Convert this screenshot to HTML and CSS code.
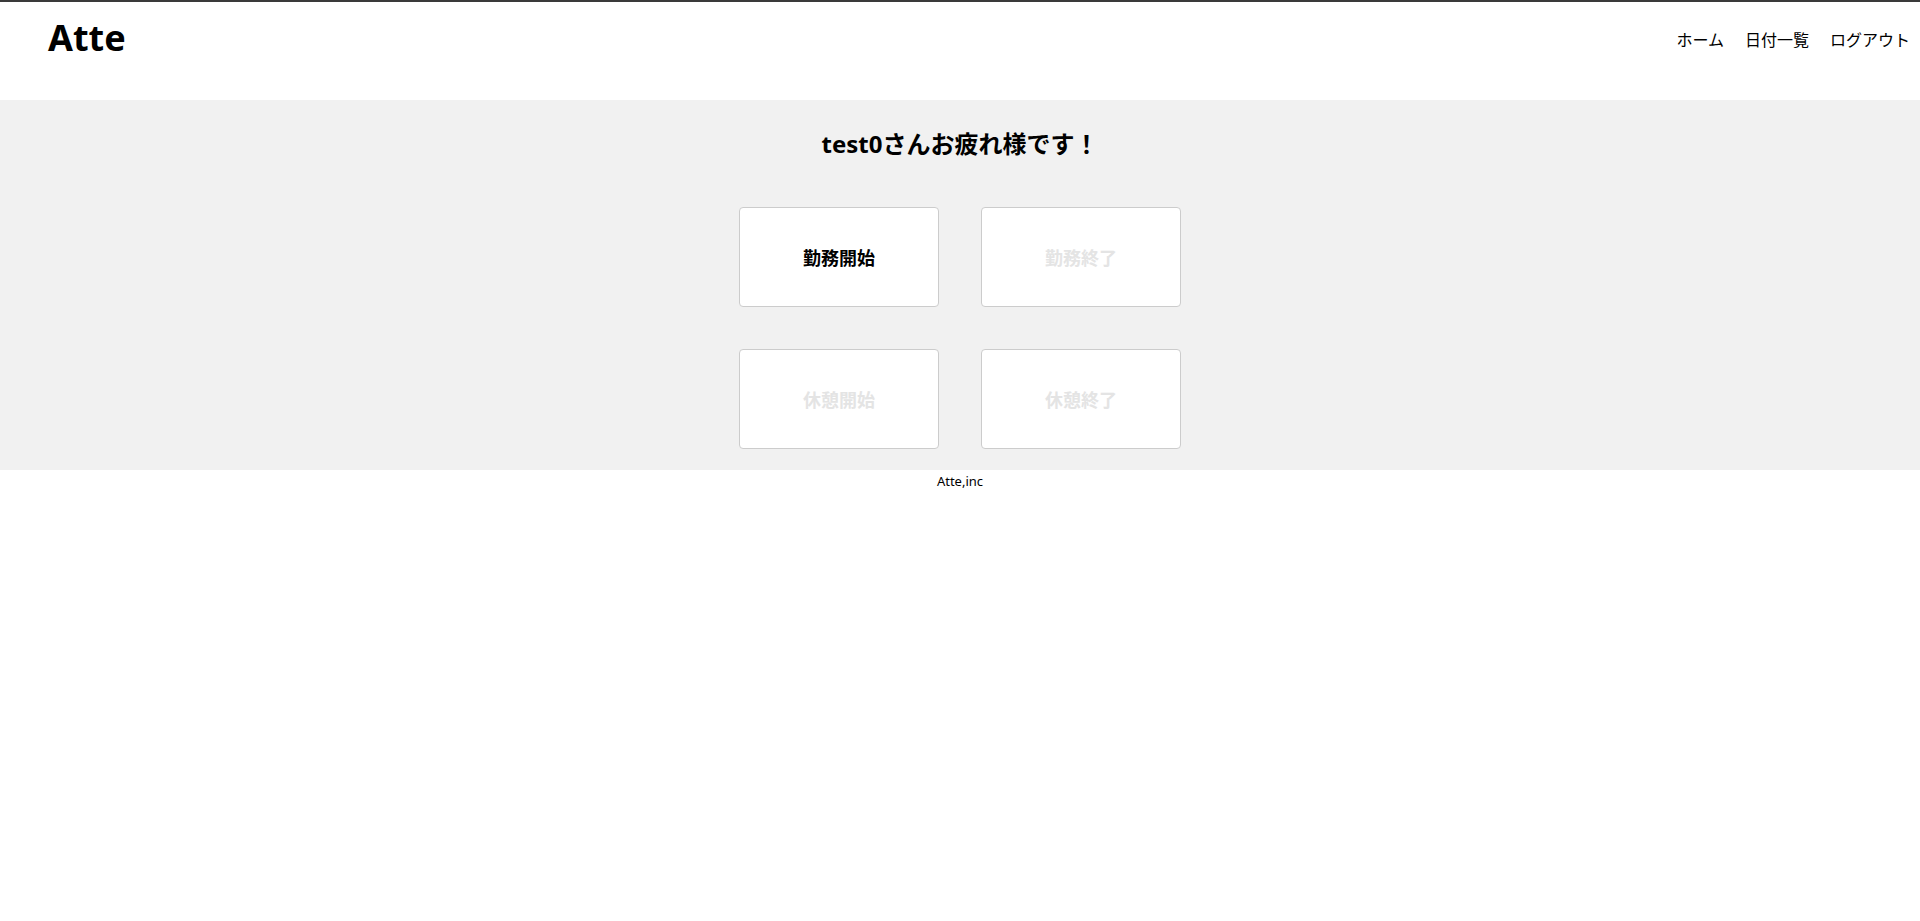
FILE: index.html
```html
<!DOCTYPE html>
<html lang="ja">
<head>
<meta charset="utf-8">
<title>Atte</title>
<link rel="stylesheet" href="styles.css">
</head>
<body>
<header class="header">
  <div class="logo">Atte</div>
  <nav class="nav">
    <a class="nav-link" href="#">ホーム</a>
    <a class="nav-link" href="#">日付一覧</a>
    <a class="nav-link" href="#">ログアウト</a>
  </nav>
</header>
<main class="main">
  <h1 class="greeting">test0さんお疲れ様です！</h1>
  <div class="stamp-grid">
    <button class="stamp">勤務開始</button>
    <button class="stamp stamp-disabled">勤務終了</button>
    <button class="stamp stamp-disabled">休憩開始</button>
    <button class="stamp stamp-disabled">休憩終了</button>
  </div>
</main>
<footer class="footer">Atte,inc</footer>
</body>
</html>
```

FILE: styles.css
```css
html, body {
  margin: 0;
  padding: 0;
  background: #fff;
  font-family: "Noto Sans", "Noto Sans CJK JP", sans-serif;
  color: #000;
}

.header {
  box-sizing: border-box;
  height: 100px;
  border-top: 2px solid #3a3a3a;
  padding: 16px 10px 0 48px;
  display: flex;
  justify-content: space-between;
  align-items: flex-start;
}

.logo {
  font-size: 36px;
  font-weight: 700;
  line-height: 40px;
}

.nav {
  display: flex;
  gap: 21px;
  margin-top: 10px;
}

.nav-link {
  font-size: 16px;
  line-height: 24px;
  color: #000;
  text-decoration: none;
}

.main {
  box-sizing: border-box;
  height: 370px;
  background: #f1f1f1;
  padding: 28px 0 21px;
  display: flex;
  flex-direction: column;
  align-items: center;
}

.greeting {
  margin: 0 0 47px;
  font-size: 24px;
  line-height: 32px;
  font-weight: 700;
}

.stamp-grid {
  display: grid;
  grid-template-columns: 200px 200px;
  grid-auto-rows: 100px;
  gap: 42px;
}

.stamp {
  background: #fff;
  border: 1px solid #cccccc;
  border-radius: 4px;
  font-family: inherit;
  font-size: 18px;
  font-weight: 700;
  color: #000;
  padding: 0;
  cursor: pointer;
}

.stamp-disabled {
  color: #e4e4e4;
}

.footer {
  text-align: center;
  font-size: 13px;
  line-height: 22px;
}
```
